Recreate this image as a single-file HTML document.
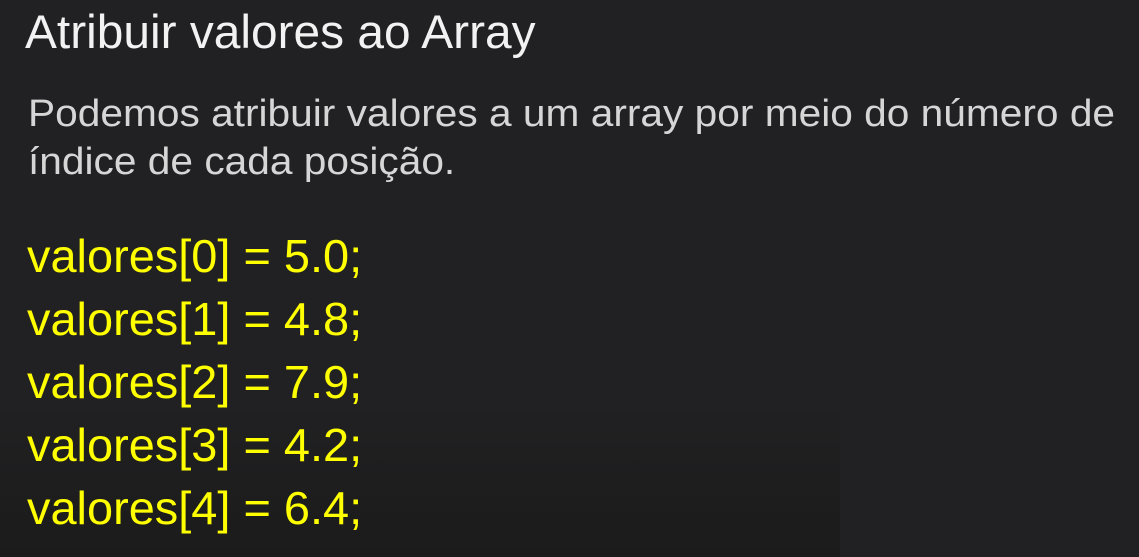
<!DOCTYPE html>
<html><head><meta charset="utf-8"><style>
html,body{margin:0;padding:0}
body{width:1139px;height:557px;overflow:hidden;background:#212123;position:relative;font-family:"Liberation Sans",Arial,sans-serif}
.shade{position:absolute;left:0;top:400px;width:840px;height:157px;background:linear-gradient(#212123,#1b1b1b)}
.t{position:absolute;left:25px;top:8px;font-size:47px;line-height:1;color:#f2f2f2;white-space:nowrap;transform:scaleX(1.018);transform-origin:0 0}
.p{position:absolute;left:28px;top:90px;font-size:38px;line-height:48px;color:#d6d6d6;white-space:nowrap;transform:scaleX(1.07);transform-origin:0 0}
.c{position:absolute;left:27px;top:225px;font-size:46px;line-height:63px;color:#ffff00;white-space:nowrap;transform:scaleX(1.02);transform-origin:0 0}
</style></head><body>
<div class="shade"></div>
<div class="t">Atribuir valores ao Array</div>
<div class="p">Podemos atribuir valores a um array por meio do número de<br>índice de cada posição.</div>
<div class="c">valores[0] = 5.0;<br>valores[1] = 4.8;<br>valores[2] = 7.9;<br>valores[3] = 4.2;<br>valores[4] = 6.4;</div>
</body></html>
